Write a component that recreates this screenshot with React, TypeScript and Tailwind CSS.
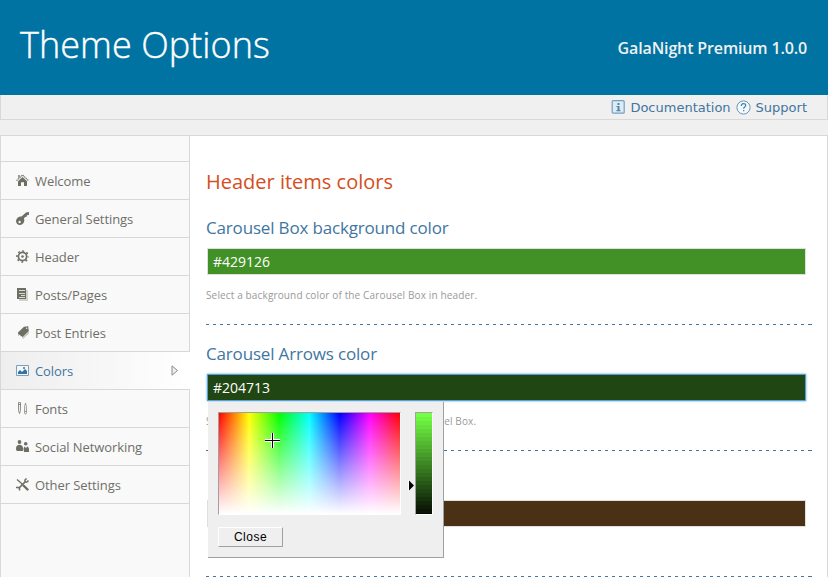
import React from "react";

const INK = "#6e6e63";

const icons: Record<string, React.ReactNode> = {
  home: (
    <g>
      <path d="M.5 6.7 6.5 1l6 5.7" fill="none" stroke="#85857b" strokeWidth="1.3" strokeDasharray="1.6 .5" />
      <path d="M2 1h2v2L2 4.8z" fill="#9a9a90" />
      <path d="M2 7.2 6.5 3l4.5 4.2V12H8V8.2H5V12H2z" fill={INK} />
    </g>
  ),
  key: (
    <g>
      <path d="M13 0v2.8l-2 .4-.4 1.5-1.5.3L8 6.500c1 3-.5 6.200-4 6.500C1.500 13 0 11.300 0 9c.2-3 2.800-4.800 5.500-4.500L10 .6z" fill={INK} />
      <circle cx="3.600" cy="10" r="1.200" fill="#f3f3f0" />
    </g>
  ),
  gear: (
    <g fill="none" stroke={INK}>
      <circle cx="6.500" cy="6.500" r="4.100" strokeWidth="1.700" />
      <circle cx="6.500" cy="6.500" r="5.600" strokeWidth="1.500" strokeDasharray="1.900 2.498" strokeDashoffset=".95" />
      <circle cx="6.500" cy="6.500" r="1.300" fill={INK} stroke="none" />
    </g>
  ),
  posts: (
    <g>
      <path d="M3 2h9v11H3z" fill="#d2d2cc" />
      <path d="M1 0h9v11H1z" fill={INK} />
      <path d="M3 2.500h6M3 5.500h6M5 7.500h4M3 9.500h6" stroke="#f5f5f2" strokeWidth=".8" />
    </g>
  ),
  tag: (
    <g>
      <path d="M2.500 7.500 8 2.500l5 1v4l-6 5.500z" fill="#c9c9c2" />
      <path d="M2 6.500 8 .8 12.300.3 12.600 5 6.500 11 2 9.200z" fill={INK} />
      <path d="m2.200 8.500 4.300 3" stroke="#fff" />
      <circle cx="10.700" cy="2.200" r=".8" fill="#ddd" />
    </g>
  ),
  image: (
    <g>
      <path d="M.5 1.500h12v10H.5z" fill="#f1f7fb" stroke="#7c9fbc" />
      <path d="M2 10V8l2-2 2 2 3-3 2 2v3z" fill="#39709f" />
      <circle cx="8" cy="4" r="1" fill="#39709f" />
    </g>
  ),
  pens: (
    <g fill="#eeeeea" stroke="#77776e" strokeWidth=".8">
      <path d="M2.500.5h2v8l-1 3-1-3zM2 2.500h3" />
      <path d="M8.500 4.500 9.500 1l1 3.500v6l-.5 1.500H9l-.5-1.500z" stroke="#8f8f87" />
      <path d="M8 9.500h3" stroke="#8f8f87" />
    </g>
  ),
  people: (
    <g fill={INK}>
      <circle cx="3.500" cy="2" r="1.900" />
      <path d="M0 8.500C0 6 1.500 4.800 3.500 4.800S7 6 7 8.500V11H1.200C.4 11 0 10 0 8.500z" />
      <circle cx="9.700" cy="3.700" r="1.800" />
      <path d="M7.500 8.500 8.500 6.500 10 8l1.300-1.500C12.500 7 13 8 13 9.500V12H8z" />
    </g>
  ),
  tools: (
    <g fill="none" stroke={INK}>
      <path d="m1 1.500 3.500 3 5 5" strokeWidth="1.300" />
      <path d="m8 8 3.500 3.500" strokeWidth="2.400" strokeLinecap="round" />
      <path d="m9 4-6 6" strokeWidth="1.700" />
      <path d="M10.500.5 9 2v2h2l1.500-1.500M0 9.500h2.500l1 1v2" strokeWidth="1.500" />
    </g>
  ),
};

function Icon({ name }: { name: string }) {
  return (
    <svg width="13" height="13" viewBox="0 0 13 13" className="mr-[6px] shrink-0">
      {icons[name]}
    </svg>
  );
}

const menu = [
  ["home", "Welcome"],
  ["key", "General Settings"],
  ["gear", "Header"],
  ["posts", "Posts/Pages"],
  ["tag", "Post Entries"],
  ["image", "Colors"],
  ["pens", "Fonts"],
  ["people", "Social Networking"],
  ["tools", "Other Settings"],
];

function Sidebar() {
  return (
    <nav className="flex w-[189px] shrink-0 flex-col tracking-[-0.08px]">
      <div className="h-[26px] border-r border-b border-[#d8d8d8] bg-[#f9f9f9]" />
      {menu.map(([icon, label]) =>
        label === "Colors" ? (
          <a key={label} className="flex h-[38px] items-center border-b border-[#d8d8d8] bg-linear-to-r from-[#eeeeee] to-white pl-[15px] text-[13px] text-[#42759f]">
            <Icon name={icon} />
            <span className="relative top-px">{label}</span>
            <svg width="8" height="11" viewBox="0 0 8 11" className="mr-[11px] ml-auto">
              <path d="M1 .8 6.500 5.500 1 10.200z" fill="#eee" stroke="#8b8b8b" />
            </svg>
          </a>
        ) : (
          <a key={label} className="flex h-[38px] items-center border-r border-b border-[#d8d8d8] bg-[#f9f9f9] pl-[15px] text-[13px] text-[#6f6f68]">
            <Icon name={icon} />
            <span className="relative top-px">{label}</span>
          </a>
        ),
      )}
      <div className="flex-1 border-r border-[#d8d8d8] bg-[#f9f9f9]" />
    </nav>
  );
}

function ColorPicker() {
  return (
    <div className="absolute top-[62px] left-[2px] z-10 flex h-[156px] w-[236px] flex-col border-r border-b border-[#a0a0a0] bg-[#efefef] pt-[10px] pl-[10px]">
      <div className="flex">
        <div className="relative h-[103px] w-[183px] border border-t-[#a0a0a0] border-r-white border-b-white border-l-[#a0a0a0] bg-[linear-gradient(to_bottom,rgba(255,255,255,0),#fff),linear-gradient(to_right,#f00,#ff0,#0f0,#0ff,#00f,#f0f,#f00)]">
          <svg width="15" height="15" viewBox="0 0 15 15" className="absolute top-[20px] left-[46px]">
            <path d="M0 7.500h15M7.500 0v15" stroke="#fff" strokeWidth="3" />
            <path d="M0 7.500h15M7.500 0v15" stroke="#000" />
          </svg>
        </div>
        <svg width="6" height="11" viewBox="0 0 6 11" className="mt-[68px] ml-[7px]">
          <path d="M1 .5v10l5-5z" fill="#000" />
          <path d="M.5 0v11" stroke="#fff" />
        </svg>
        <div className="ml-px flex h-[103px] w-[18px] flex-col border border-t-[#a0a0a0] border-r-white border-b-white border-l-[#a0a0a0] bg-black">
          {Array.from({ length: 26 }, (_, i) => {
            const v = 1 - i / 26;
            return (
              <div
                key={i}
                className={i === 25 ? "h-px" : "h-[4px]"}
                style={{ backgroundColor: `rgb(${115 * v},${255 * v},${68 * v})` }}
              />
            );
          })}
        </div>
      </div>
      <button className="mt-[12px] h-[20px] w-[65px] border border-t-white border-r-[#a0a0a0] border-b-[#a0a0a0] border-l-white font-['Liberation_Sans',sans-serif] text-[12px] leading-[18px] tracking-[0.5px] text-black">
        Close
      </button>
    </div>
  );
}

interface FieldProps {
  label?: string;
  value?: string;
  note?: string;
  look: string;
  picker?: boolean;
}

function ColorField({ label, value, note, look, picker }: FieldProps) {
  return (
    <section className="relative flex h-[126px] flex-col">
      <h3 className="h-[34px] text-[17px] leading-[28px] tracking-[-0.17px] text-[#42759f]">{label}</h3>
      <div className={`ml-px h-[27px] w-[599px] shrink-0 border pl-[5px] text-[14px] leading-[25px] text-white ${look}`}>{value}</div>
      <p className="mt-[13px] h-[15px] text-[10px] leading-[15px] tracking-[0.14px] whitespace-nowrap text-[#999]">{note}</p>
      <div className="mt-[21px] h-px w-[606px] border-r border-[#42759f] bg-[repeating-linear-gradient(to_right,#42759f_0px,#42759f_3px,transparent_3px,transparent_7px)]" />
      {picker && <ColorPicker />}
    </section>
  );
}

export default function App() {
  return (
    <div className="flex h-[577px] w-[828px] flex-col overflow-hidden bg-[#f0f0f0] font-['Open_Sans',sans-serif]">
      <header className="flex h-[95px] shrink-0 items-center justify-between bg-[#0073a3] px-[21px] text-white">
        <h1 className="-ml-px pb-[6px] text-[36px] leading-[88px] font-light tracking-[0.06px] [-webkit-text-stroke:0.4px_white]">Theme Options</h1>
        <span className="text-[16px] font-semibold tracking-[-0.14px] text-[#f0f0f0]">GalaNight Premium 1.0.0</span>
      </header>
      <div className="flex h-[25px] shrink-0 items-center justify-end border-x border-b border-[#d8d8d8] pr-[20px] font-['DejaVu_Sans',sans-serif] text-[13px] text-[#42759f]">
        <svg width="14" height="14" viewBox="0 0 14 14" className="mr-[5px]">
          <rect x="1.200" y=".7" width="12" height="12.500" rx="1" fill="#dcebf4" stroke="#73a2c2" strokeWidth="1.200" />
          <path d="M6.500 3h2v2h-2zM5.500 6h3v4h1v1.200h-4V10h1V7h-1z" fill="#5286ad" />
        </svg>
        <span className="pt-[2px]">Documentation</span>
        <svg width="15" height="15" viewBox="0 0 15 15" className="mr-[5px] ml-[5px]">
          <circle cx="7.500" cy="7.500" r="6.600" fill="#f4fafc" stroke="#6795b5" />
          <path d="M5.300 6c0-1.500.9-2.300 2.200-2.300S9.700 4.500 9.700 5.500c0 1.500-2.100 1.600-2.100 3.200" fill="none" stroke="#4b81a9" strokeWidth="1.200" />
          <path d="M7 10h1.300v1.300H7z" fill="#4b81a9" />
        </svg>
        <span className="pt-[2px]">Support</span>
      </div>
      <div className="mt-[15px] flex min-h-0 flex-1 border-x border-t border-[#d8d8d8] bg-white">
        <Sidebar />
        <main className="flex-1 pl-[16px]">
          <h2 className="mt-[31px] h-[47px] text-[20px] leading-[30px] text-[#d54e21]">Header items colors</h2>
          <ColorField label="Carousel Box background color" value="#429126" note="Select a background color of the Carousel Box in header." look="border-[#dfdfdf] bg-[#429126]" />
          <ColorField
            label="Carousel Arrows color"
            value="#204713"
            note="Select a color of the Carousel Arrows in its Carousel Box."
            look="border-[#5b9dd9] bg-[#204713] shadow-[0_0_2px_rgba(30,140,190,0.8)]"
            picker
          />
          <ColorField look="border-[#dfdfdf] bg-[#4a3115]" />
        </main>
      </div>
    </div>
  );
}
